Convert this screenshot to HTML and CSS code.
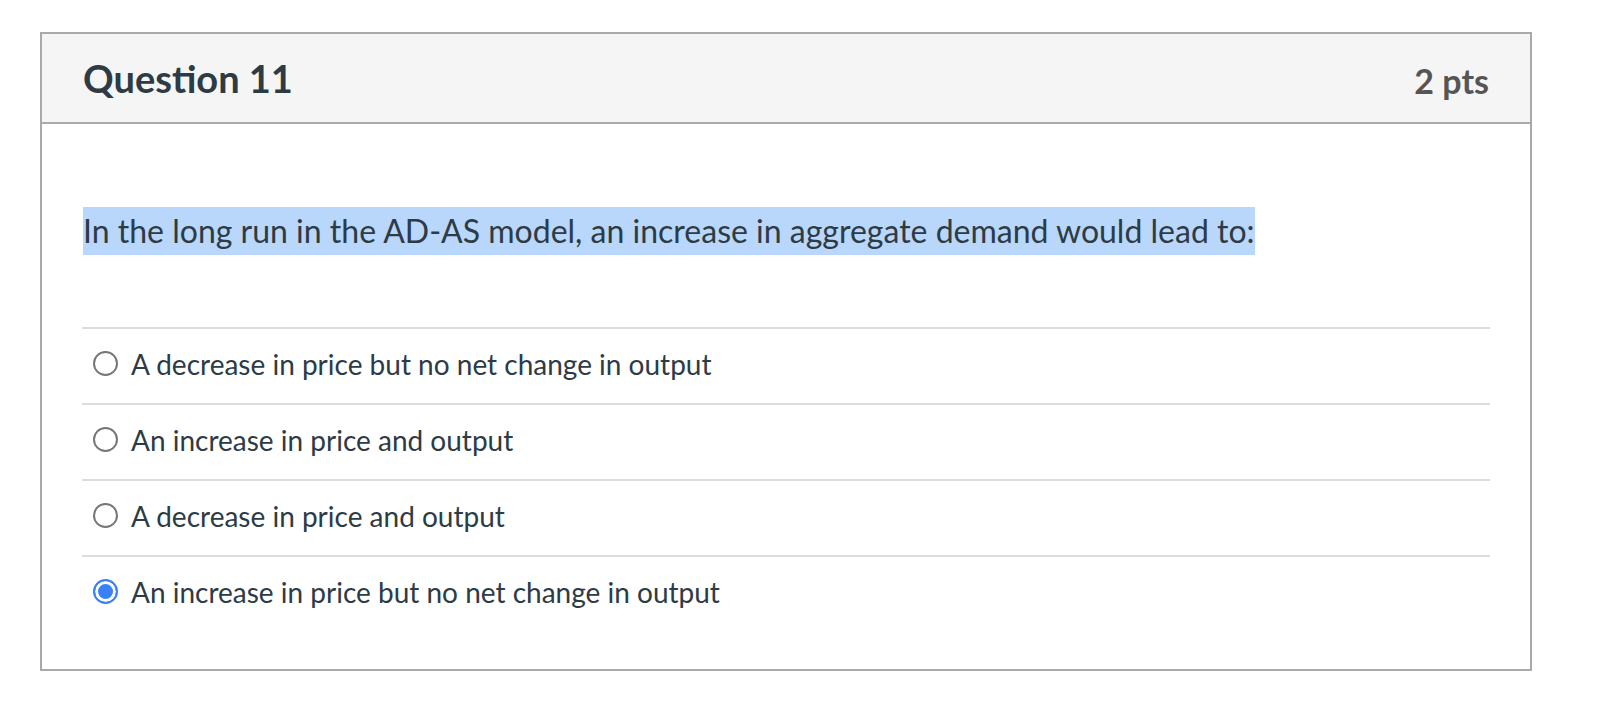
FILE: index.html
```html
<!DOCTYPE html>
<html lang="en">
<head>
<meta charset="utf-8">
<title>Question 11</title>
<link rel="stylesheet" href="styles.css">
</head>
<body>
<div class="card">
  <div class="card-header">
    <h2 class="title">Question 11</h2>
    <span class="points">2 pts</span>
  </div>
  <div class="card-body">
    <p class="question"><span class="selected-text">In the long run in the AD-AS model, an increase in aggregate demand would lead to:</span></p>
    <ul class="answers">
      <li class="answer"><span class="radio"></span><span class="answer-text">A decrease in price but no net change in output</span></li>
      <li class="answer"><span class="radio"></span><span class="answer-text">An increase in price and output</span></li>
      <li class="answer"><span class="radio"></span><span class="answer-text">A decrease in price and output</span></li>
      <li class="answer"><span class="radio checked"></span><span class="answer-text">An increase in price but no net change in output</span></li>
    </ul>
  </div>
</div>
</body>
</html>
```

FILE: styles.css
```css
html, body {
  margin: 0;
  padding: 0;
  background: #ffffff;
}
body {
  font-family: Lato, "Open Sans", sans-serif;
  color: #2d3b45;
}
.card {
  box-sizing: border-box;
  width: 1492px;
  margin: 32px 0 0 40px;
  border: 2px solid #a9a9a9;
  background: #fff;
}
.card-header {
  height: 88px;
  box-sizing: content-box;
  display: flex;
  align-items: center;
  justify-content: space-between;
  padding: 0 41px 0 41px;
  background: #f5f5f5;
  border-bottom: 2px solid #a9a9a9;
}
.title {
  margin: 0;
  font-size: 38px;
  font-weight: 700;
  color: #2d3b45;
}
.points {
  margin-top: 4px;
  font-size: 34px;
  font-weight: 700;
  color: #555555;
}
.card-body {
  padding: 83px 40px 38px 40px;
}
.question {
  margin: 0 0 72px 0;
  padding-left: 1px;
  font-size: 32px;
  line-height: 48px;
}
.selected-text {
  background: #b9d6fb;
  padding: 4px 0 5px 0;
}
.answers {
  list-style: none;
  margin: 0;
  padding: 0;
}
.answer {
  display: flex;
  align-items: center;
  box-sizing: border-box;
  height: 76px;
  border-top: 2px solid #dddddd;
  padding: 0 0 5px 11px;
}
.radio {
  box-sizing: border-box;
  width: 25px;
  height: 25px;
  border-radius: 50%;
  border: 2px solid #767676;
  flex: none;
  margin-right: 13px;
}
.radio.checked {
  border-color: #3a80f6;
  background: #3a80f6;
  box-shadow: inset 0 0 0 3px #ffffff;
}
.answer-text {
  font-size: 28px;
}
```
